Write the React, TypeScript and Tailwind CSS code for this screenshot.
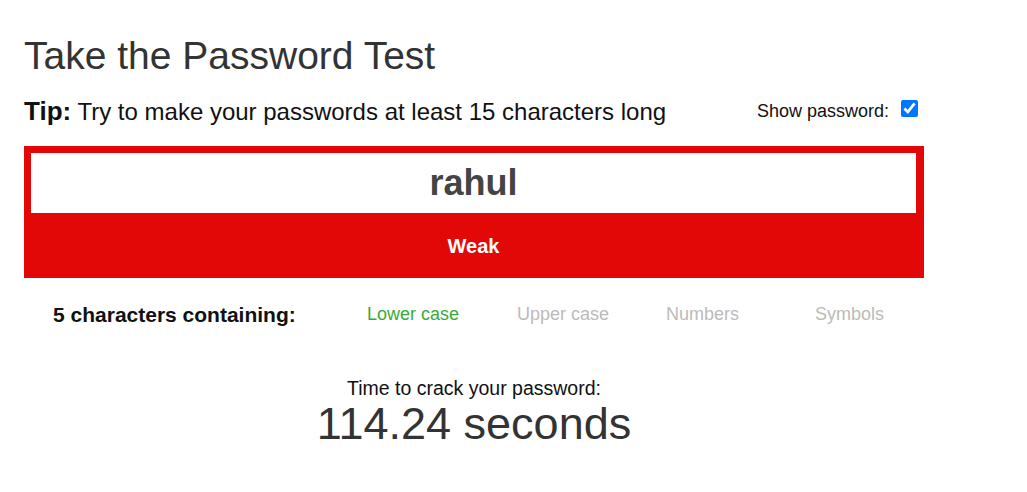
import React, { useState } from 'react';

const App: React.FC = () => {
  const [showPassword, setShowPassword] = useState(true);
  const password = 'rahul';

  const checks = [
    { label: 'Lower case', ok: /[a-z]/.test(password), w: 'w-[150px]' },
    { label: 'Upper case', ok: /[A-Z]/.test(password), w: 'w-[149px]' },
    { label: 'Numbers', ok: /[0-9]/.test(password), w: 'w-[149px]' },
    { label: 'Symbols', ok: /[^a-zA-Z0-9]/.test(password), w: 'w-[100px]' },
  ];

  return (
    <div className="min-h-screen bg-white text-[#333] font-['Liberation_Sans',Arial,sans-serif]">
      <div className="w-[900px] ml-[24px]">
        {/* Heading */}
        <h1 className="pt-[34px] text-[39px] leading-[44px] text-[#333]">Take the Password Test</h1>

        {/* Tip + toggle */}
        <div className="mt-[17px] flex items-center justify-between">
          <p className="text-[24px] leading-[32px] text-[#111]">
            <span className="font-bold text-[26px]">Tip:</span> Try to make your passwords at least 15 characters long
          </p>
          <label className="flex items-center gap-[12px] mr-[6px] text-[18px] text-[#111]">
            <span>Show password:</span>
            <input
              type="checkbox"
              checked={showPassword}
              onChange={(e) => setShowPassword(e.target.checked)}
              className="w-[17px] h-[17px] mb-[7px] accent-[#0075ff]"
            />
          </label>
        </div>

        {/* Password box */}
        <div className="mt-[18px] bg-[#e20808] pt-[7px] pl-[7px] pr-[8px]">
          <input
            type={showPassword ? 'text' : 'password'}
            value={password}
            readOnly
            className="block w-full h-[60px] bg-white text-center text-[36px] font-bold text-[#444] outline-none"
          />
          <div className="h-[65px] flex items-center justify-center text-[20px] font-bold text-white">Weak</div>
        </div>

        {/* Character summary */}
        <div className="mt-[21px] flex items-center">
          <div className="w-[343px] pl-[29px] text-[21px] font-bold text-[#111]">
            {password.length} characters containing:
          </div>
          {checks.map((c) => (
            <div
              key={c.label}
              className={`${c.w} text-[18px] ${c.ok ? 'text-[#3aaa35]' : 'text-[#bbb]'}`}
            >
              {c.label}
            </div>
          ))}
        </div>

        {/* Crack time */}
        <div className="mt-[46px] text-center">
          <div className="text-[19.5px] leading-[22px] text-[#111]">Time to crack your password:</div>
          <div className="text-[45px] leading-[50px] text-[#333]">114.24 seconds</div>
        </div>
      </div>
    </div>
  );
};

export default App;
